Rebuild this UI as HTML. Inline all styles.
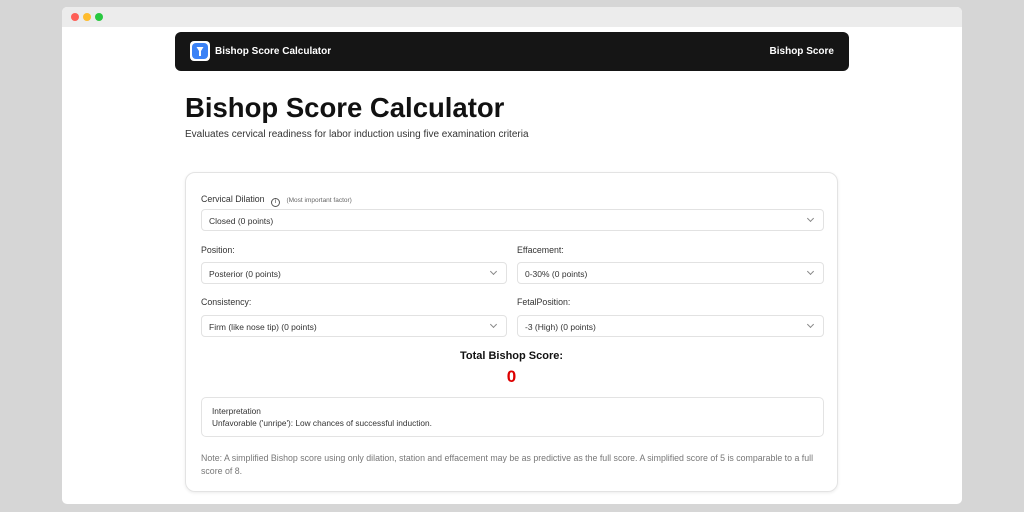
<!DOCTYPE html>
<html><head><style>
*{box-sizing:border-box;margin:0;padding:0}
body{width:1024px;height:512px;background:#d6d6d6;font-family:"Liberation Sans",sans-serif;position:relative;overflow:hidden}
.win{position:absolute;left:62px;top:7px;width:900px;height:497px;background:#fff;border-radius:5px;overflow:hidden}
.bar{height:20px;background:#ececec;position:relative}
.dot{position:absolute;top:6px;width:8px;height:8px;border-radius:50%}
.nav{position:absolute;left:113px;top:25px;width:674px;height:39px;background:#151515;border-radius:6px;color:#fff;font-weight:bold;font-size:10px}
.logo{position:absolute;left:15px;top:9px;width:20px;height:20px;background:#fff;border-radius:4px}
h1{position:absolute;left:123px;top:85px;font-size:27.5px;color:#111;font-weight:bold}
.sub{position:absolute;left:123px;top:122px;font-size:10px;color:#333}
.card{position:absolute;left:123px;top:165px;width:653px;height:320px;border:1px solid #e3e3e3;border-radius:10px;box-shadow:0 1px 3px rgba(0,0,0,.08)}
.lbl{position:absolute;font-size:8.8px;color:#333}
.sel{position:absolute;height:22px;border:1px solid #e2e2e2;border-radius:4px;font-size:8.5px;color:#333;padding:6px 7px}
.sel:after{content:"";position:absolute;right:10px;top:6px;width:4px;height:4px;border-right:1px solid #888;border-bottom:1px solid #888;transform:rotate(45deg)}
</style></head><body>
<div class="win">
<div class="bar"><div class="dot" style="left:9px;background:#fe5f57"></div><div class="dot" style="left:21px;background:#febc2e"></div><div class="dot" style="left:33px;background:#28c840"></div></div>
<div class="nav"><div class="logo"><svg width="20" height="20" viewBox="0 0 20 20"><rect x="2" y="2" width="16" height="16" rx="4" fill="#3b82f6"/><path d="M6.5 6h7l-2.5 4v5h-2v-5z" fill="#fff"/></svg></div>
<span style="position:absolute;left:40px;top:14px">Bishop Score Calculator</span>
<span style="position:absolute;right:15px;top:14px">Bishop Score</span></div>
<h1>Bishop Score Calculator</h1>
<div class="sub">Evaluates cervical readiness for labor induction using five examination criteria</div>
<div class="card">
<div class="lbl" style="left:15px;top:21px">Cervical Dilation <span style="display:inline-block;width:9px;height:9px;border:1px solid #555;border-radius:50%;font-size:6px;text-align:center;line-height:7px;margin:0 4px;vertical-align:-1px">i</span> <span style="font-size:6.5px;color:#666">(Most important factor)</span></div>
<div class="sel" style="left:15px;top:36px;width:623px">Closed (0 points)</div>
<div class="lbl" style="left:15px;top:72px">Position:</div>
<div class="sel" style="left:15px;top:89px;width:306px">Posterior (0 points)</div>
<div class="lbl" style="left:331px;top:72px">Effacement:</div>
<div class="sel" style="left:331px;top:89px;width:307px">0-30% (0 points)</div>
<div class="lbl" style="left:15px;top:124px">Consistency:</div>
<div class="sel" style="left:15px;top:142px;width:306px">Firm (like nose tip) (0 points)</div>
<div class="lbl" style="left:331px;top:124px">FetalPosition:</div>
<div class="sel" style="left:331px;top:142px;width:307px">-3 (High) (0 points)</div>
<div style="position:absolute;left:0;width:100%;top:177px;text-align:center;font-size:11px;font-weight:bold;color:#111">Total Bishop Score:</div>
<div style="position:absolute;left:0;width:100%;top:194px;text-align:center;font-size:17px;font-weight:bold;color:#d00">0</div>
<div style="position:absolute;left:15px;top:224px;width:623px;height:40px;border:1px solid #e3e3e3;border-radius:5px;padding:7px 10px;font-size:8.3px;color:#333;line-height:12px">Interpretation<br>Unfavorable ('unripe'): Low chances of successful induction.</div>
<div style="position:absolute;left:15px;top:279px;width:620px;font-size:8.8px;color:#777;line-height:13px">Note: A simplified Bishop score using only dilation, station and effacement may be as predictive as the full score. A simplified score of 5 is comparable to a full score of 8.</div>
</div>
</div>
</body></html>
